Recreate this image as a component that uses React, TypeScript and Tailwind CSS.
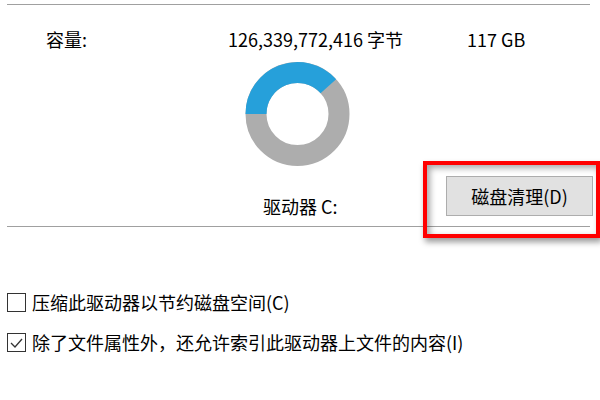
import React from "react";

const font = { fontFamily: '"Noto Sans CJK SC", "Noto Sans", sans-serif' };

function Donut() {
  // blue arc from 270deg (left) clockwise to ~48deg
  const cx = 52.5;
  const cy = 53;
  const r = 41.5;
  const pt = (deg: number) => {
    const a = ((deg - 90) * Math.PI) / 180;
    return [cx + r * Math.cos(a), cy + r * Math.sin(a)];
  };
  const [x1, y1] = pt(270);
  const [x2, y2] = pt(48);
  return (
    <svg width="106" height="106" viewBox="0 0 106 106">
      <circle cx={cx} cy={cy} r={r} fill="none" stroke="#adadad" strokeWidth="21" />
      <path
        d={`M ${x1} ${y1} A ${r} ${r} 0 0 1 ${x2} ${y2}`}
        fill="none"
        stroke="#26a0da"
        strokeWidth="21"
      />
    </svg>
  );
}

function Checkbox({ checked, label }: { checked?: boolean; label: string }) {
  return (
    <div className="flex items-center h-[24px] pl-[7px] gap-[6px]">
      <div className="w-[19px] h-[19px] border border-[#333333] bg-white flex items-center justify-center">
        {checked && (
          <svg width="17" height="17" viewBox="0 0 17 17">
            <polyline points="3,9 7,13 14,5" fill="none" stroke="#333333" strokeWidth="1.3" />
          </svg>
        )}
      </div>
      <span className="text-[18px] leading-[24px] text-black whitespace-nowrap">{label}</span>
    </div>
  );
}

export default function App() {
  return (
    <div className="relative w-[600px] h-[400px] bg-white overflow-hidden text-black" style={font}>
      <div className="mt-[4px] ml-[7px] w-[583px] h-px bg-[#a0a0a0]" />

      {/* capacity row */}
      <div className="mt-[22px] flex h-[24px] text-[18px] leading-[24px] whitespace-nowrap">
        <span className="ml-[46px] w-[182px]">容量:</span>
        <span className="w-[239px]">126,339,772,416 字节</span>
        <span>117 GB</span>
      </div>

      <div className="mt-[10px] ml-[245px]">
        <Donut />
      </div>

      {/* drive row */}
      <div className="mt-[9px] flex items-start h-[40px]">
        <span className="ml-[263px] mt-[18px] w-[183px] text-[18px] leading-[24px] whitespace-nowrap">
          驱动器 C:
        </span>
        <button className="w-[147px] h-[40px] bg-[#e1e1e1] border border-[#adadad] text-[18px] leading-[24px] text-black">
          磁盘清理(D)
        </button>
      </div>

      <div className="mt-[10px] ml-[7px] w-[583px] h-px bg-[#a0a0a0]" />

      <div className="mt-[63px]">
        <Checkbox label="压缩此驱动器以节约磁盘空间(C)" />
      </div>
      <div className="mt-[16px]">
        <Checkbox checked label="除了文件属性外，还允许索引此驱动器上文件的内容(I)" />
      </div>

      {/* red highlight annotation */}
      <div className="absolute left-[423px] top-[161px] w-[177px] h-[77px] border-[4px] border-[#ff0000] shadow-[2px_4px_6px_rgba(0,0,0,0.4),inset_3px_3px_6px_rgba(0,0,0,0.35)]" />
    </div>
  );
}
